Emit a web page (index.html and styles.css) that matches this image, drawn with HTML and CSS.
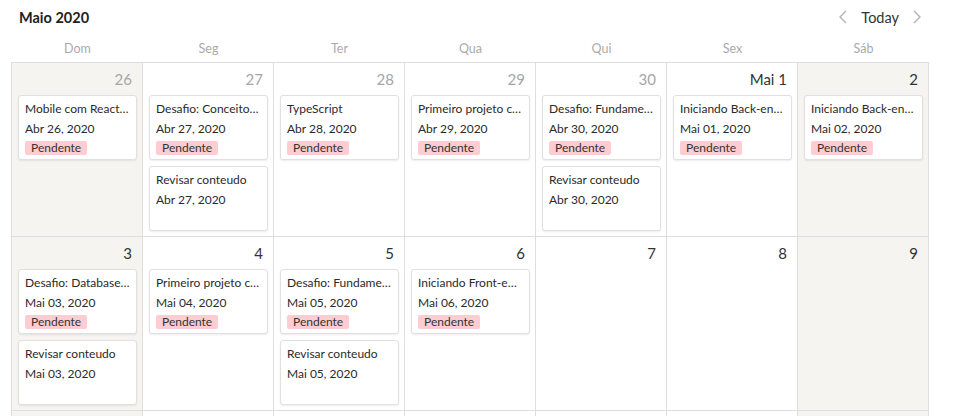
FILE: index.html
```html
<!DOCTYPE html>
<html lang="pt">
<head>
<meta charset="utf-8">
<title>Calendário</title>
<link rel="stylesheet" href="styles.css">
</head>
<body>
<div class="cal">
  <div class="toolbar">
    <div class="title">Maio 2020</div>
    <div class="nav">
      <svg class="chev" width="8" height="14" viewBox="0 0 8 14"><polyline points="7,1 1,7 7,13" fill="none" stroke="#b3b3b3" stroke-width="1.4"/></svg>
      <span class="today">Today</span>
      <svg class="chev" width="8" height="14" viewBox="0 0 8 14"><polyline points="1,1 7,7 1,13" fill="none" stroke="#b3b3b3" stroke-width="1.4"/></svg>
    </div>
  </div>
  <div class="weekdays">
    <div>Dom</div><div>Seg</div><div>Ter</div><div>Qua</div><div>Qui</div><div>Sex</div><div>Sáb</div>
  </div>
  <div class="grid">
    <div class="cell weekend">
      <div class="num muted">26</div>
      <div class="card"><div class="t">Mobile com React Native</div><div class="d">Abr 26, 2020</div><span class="badge">Pendente</span></div>
    </div>
    <div class="cell">
      <div class="num muted">27</div>
      <div class="card"><div class="t">Desafio: Conceitos do ReactJS</div><div class="d">Abr 27, 2020</div><span class="badge">Pendente</span></div>
      <div class="card"><div class="t">Revisar conteudo</div><div class="d">Abr 27, 2020</div></div>
    </div>
    <div class="cell">
      <div class="num muted">28</div>
      <div class="card"><div class="t">TypeScript</div><div class="d">Abr 28, 2020</div><span class="badge">Pendente</span></div>
    </div>
    <div class="cell">
      <div class="num muted">29</div>
      <div class="card"><div class="t">Primeiro projeto com Node.js</div><div class="d">Abr 29, 2020</div><span class="badge">Pendente</span></div>
    </div>
    <div class="cell">
      <div class="num muted">30</div>
      <div class="card"><div class="t">Desafio: Fundamentos do Node.js</div><div class="d">Abr 30, 2020</div><span class="badge">Pendente</span></div>
      <div class="card"><div class="t">Revisar conteudo</div><div class="d">Abr 30, 2020</div></div>
    </div>
    <div class="cell">
      <div class="num">Mai 1</div>
      <div class="card"><div class="t">Iniciando Back-end do app</div><div class="d">Mai 01, 2020</div><span class="badge">Pendente</span></div>
    </div>
    <div class="cell weekend">
      <div class="num">2</div>
      <div class="card"><div class="t">Iniciando Back-end do app</div><div class="d">Mai 02, 2020</div><span class="badge">Pendente</span></div>
    </div>

    <div class="cell weekend">
      <div class="num">3</div>
      <div class="card"><div class="t">Desafio: Database upload</div><div class="d">Mai 03, 2020</div><span class="badge">Pendente</span></div>
      <div class="card"><div class="t">Revisar conteudo</div><div class="d">Mai 03, 2020</div></div>
    </div>
    <div class="cell">
      <div class="num">4</div>
      <div class="card"><div class="t">Primeiro projeto com ReactJS</div><div class="d">Mai 04, 2020</div><span class="badge">Pendente</span></div>
    </div>
    <div class="cell">
      <div class="num">5</div>
      <div class="card"><div class="t">Desafio: Fundamentos do ReactJS</div><div class="d">Mai 05, 2020</div><span class="badge">Pendente</span></div>
      <div class="card"><div class="t">Revisar conteudo</div><div class="d">Mai 05, 2020</div></div>
    </div>
    <div class="cell">
      <div class="num">6</div>
      <div class="card"><div class="t">Iniciando Front-end do app</div><div class="d">Mai 06, 2020</div><span class="badge">Pendente</span></div>
    </div>
    <div class="cell"><div class="num">7</div></div>
    <div class="cell"><div class="num">8</div></div>
    <div class="cell weekend"><div class="num">9</div></div>

    <div class="cell weekend"><div class="num">10</div></div>
    <div class="cell"><div class="num">11</div></div>
    <div class="cell"><div class="num">12</div></div>
    <div class="cell"><div class="num">13</div></div>
    <div class="cell"><div class="num">14</div></div>
    <div class="cell"><div class="num">15</div></div>
    <div class="cell weekend"><div class="num">16</div></div>
  </div>
</div>
</body>
</html>
```
FILE: styles.css
```css
* { box-sizing: border-box; }
html, body { margin: 0; padding: 0; background: #fff; overflow: hidden; height: 416px; }
body {
  font-family: Lato, "Noto Sans", sans-serif;
  font-size: 12px;
  color: #333;
}
.cal {
  margin-left: 11px;
  width: 918px;
}
.toolbar {
  display: flex;
  justify-content: space-between;
  align-items: center;
  height: 34px;
  padding: 0 8px 0 8px;
}
.title {
  font-weight: bold;
  font-size: 14.5px;
  color: #222;
}
.nav {
  display: flex;
  align-items: center;
  gap: 14px;
}
.today {
  font-size: 14.5px;
  color: #333;
}
.chev { display: block; }
.weekdays {
  display: grid;
  grid-template-columns: repeat(7, 131px);
  padding-left: 1px;
  height: 28px;
  align-items: center;
  color: #aaa;
  font-size: 12.5px;
  text-align: center;
}
.grid {
  display: grid;
  grid-template-columns: repeat(7, 131px);
  grid-auto-rows: 174px;
  border-left: 1px solid #dedede;
  border-top: 1px solid #dedede;
}
.cell {
  border-right: 1px solid #dedede;
  border-bottom: 1px solid #dedede;
  padding: 6px 5px 0 6px;
  display: flex;
  flex-direction: column;
  gap: 6px;
  min-width: 0;
}
.weekend { background: #f5f4f0; }
.num {
  text-align: right;
  font-size: 15px;
  line-height: 20px;
  padding-right: 5px;
  color: #333;
}
.num.muted { color: #a6a6a6; }
.card {
  background: #fff;
  border: 1px solid #e0e0e0;
  border-radius: 3px;
  box-shadow: 0 1px 2px rgba(0,0,0,0.08);
  padding: 3px 6px 4px 6px;
  height: 65px;
  min-width: 0;
}
.card .t, .card .d {
  line-height: 20px;
  color: #2a2a2a;
  white-space: nowrap;
  overflow: hidden;
  text-overflow: ellipsis;
}
.badge {
  display: inline-block;
  margin-top: 2px;
  background: #ffccd1;
  color: #333;
  border-radius: 2px;
  line-height: 14px;
  padding: 0 6px;
}
```
